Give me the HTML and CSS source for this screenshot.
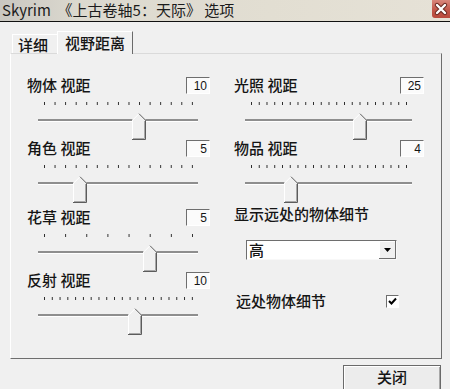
FILE: index.html
```html
<!doctype html>
<html lang="zh-CN">
  <head>
    <meta charset="UTF-8" />
    <title>Skyrim 选项</title>
    <link rel="stylesheet" href="styles.css">
  </head>
  <body>
    <svg class="defs" width="0" height="0">
      <symbol id="thumb" viewBox="0 0 14 27">
        <path d="M0 27V7L7 0L14 7V27Z" fill="#f0f0f0" />
        <path d="M0.5 26V7.2L7 0.7" stroke="#fff" fill="none" />
        <path d="M7 0.7L13.5 7.2V26.5H0" stroke="#5c5c5c" fill="none" />
        <path d="M12.5 8V25.5H1" stroke="#a8a8a8" fill="none" />
      </symbol>
    </svg>

    <div class="titlebar">
      <span class="title">Skyrim  《上古卷轴5：天际》 选项</span>
      <span class="close">
        <svg width="18" height="18" viewBox="0 0 18 18">
          <path d="M5 5L13 13M13 5L5 13" stroke="#6a2a22" stroke-width="4.4" stroke-linecap="round" />
          <path d="M5 5L13 13M13 5L5 13" stroke="#fff" stroke-width="2.4" stroke-linecap="round" />
        </svg>
      </span>
    </div>

    <div class="tabs">
      <span class="tab">详细</span>
      <span class="tab active">视野距离</span>
    </div>

    <div class="panel">
      <div class="col">
        <div class="block">
          <div class="head"><span class="label">物体 视距</span><span class="value">10</span></div>
          <div class="slider" style="--n: 15; --v: 0.64">
            <div class="ticks"></div>
            <div class="track"></div>
            <svg class="thumb"><use href="#thumb" /></svg>
          </div>
        </div>
        <div class="block spaced">
          <div class="head"><span class="label">角色 视距</span><span class="value">5</span></div>
          <div class="slider" style="--n: 15; --v: 0.24">
            <div class="ticks"></div>
            <div class="track"></div>
            <svg class="thumb"><use href="#thumb" /></svg>
          </div>
        </div>
        <div class="block">
          <div class="head"><span class="label">花草 视距</span><span class="value">5</span></div>
          <div class="slider" style="--n: 8; --v: 0.7143">
            <div class="ticks"></div>
            <div class="track"></div>
            <svg class="thumb"><use href="#thumb" /></svg>
          </div>
        </div>
        <div class="block">
          <div class="head"><span class="label">反射 视距</span><span class="value">10</span></div>
          <div class="slider low" style="--n: 20; --v: 0.61">
            <div class="ticks"></div>
            <div class="track"></div>
            <svg class="thumb"><use href="#thumb" /></svg>
          </div>
        </div>
      </div>

      <div class="col">
        <div class="block">
          <div class="head"><span class="label">光照 视距</span><span class="value">25</span></div>
          <div class="slider" style="--n: 21; --v: 0.70">
            <div class="ticks"></div>
            <div class="track"></div>
            <svg class="thumb"><use href="#thumb" /></svg>
          </div>
        </div>
        <div class="block">
          <div class="head"><span class="label">物品 视距</span><span class="value">4</span></div>
          <div class="slider" style="--n: 21; --v: 0.255">
            <div class="ticks"></div>
            <div class="track"></div>
            <svg class="thumb"><use href="#thumb" /></svg>
          </div>
        </div>

        <div class="label detail-title">显示远处的物体细节</div>
        <div class="select">
          <span class="select-text">高</span>
          <span class="select-btn">
            <svg width="7" height="4" viewBox="0 0 7 4"><path d="M0 0H7L3.5 4Z" fill="#000" /></svg>
          </span>
        </div>

        <div class="check-row">
          <span class="label">远处物体细节</span>
          <span class="checkbox">
            <svg width="9" height="8" viewBox="0 0 9 8"><path d="M1 4L3.5 6.5L8 1.5" stroke="#000" stroke-width="2" fill="none" /></svg>
          </span>
        </div>
      </div>
    </div>

    <div class="footer">
      <button class="btn">关闭</button>
    </div>
  </body>
</html>
```

FILE: styles.css
```css
* {
  box-sizing: border-box;
  padding: 0;
  margin: 0;
}

html,
body {
  width: 450px;
  height: 389px;
  overflow: hidden;
}

body {
  background: #f0f0f0;
  color: #151515;
  font-family: "Noto Sans CJK SC", "Noto Sans", sans-serif;
  font-size: 15px;
  font-weight: 500;
}

.defs {
  position: absolute;
}

/* title bar */

.titlebar {
  display: flex;
  height: 22px;
  border-bottom: 1px solid #111;
  background: linear-gradient(to right, #c9c7c1 0, #dcd9cf 18%, #e2ded2 60%, #e6e2d7 100%);
}

.title {
  flex: 1;
  padding-left: 2px;
  font-size: 15px;
  font-weight: 400;
  line-height: 20px;
  white-space: pre;
  color: #1b1b1b;
}

.close {
  display: block;
  width: 18px;
  height: 18px;
  border-bottom-left-radius: 3px;
  background: linear-gradient(#d9877c, #c2574a 55%, #b94a3d);
}

.close svg {
  display: block;
}

/* tabs */

.tabs {
  display: flex;
  align-items: flex-end;
  height: 22px;
  margin: 9px 0 0 12px;
}

.tab {
  height: 19px;
  padding: 0 9px 0 5px;
  line-height: 19px;
  border-top: 1px solid #fff;
  border-left: 1px solid #fff;
}

.tab.active {
  position: relative;
  z-index: 1;
  height: 23px;
  margin-bottom: -1px;
  padding: 0 7px 0 7px;
  line-height: 21px;
  background: #f0f0f0;
  border-right: 1px solid #6a6a6a;
}

/* panel */

.panel {
  display: grid;
  grid-template-columns: 183px 190px;
  column-gap: 24px;
  align-items: start;
  width: 432px;
  height: 306px;
  margin-left: 10px;
  padding: 22px 0 0 16px;
  border: 1px solid #fff;
  border-top-color: #dadada;
  border-right-color: #6e6e6e;
  border-bottom-color: #6e6e6e;
}

.block {
  height: 63px;
}

.block.spaced {
  height: 69px;
}

.head {
  display: flex;
  align-items: center;
  justify-content: space-between;
  height: 18px;
}

.label {
  line-height: 18px;
  white-space: nowrap;
}

.value {
  width: 24px;
  height: 17px;
  padding-right: 2px;
  font-family: "Liberation Sans", Arial, sans-serif;
  font-size: 12px;
  font-weight: 400;
  line-height: 16px;
  text-align: right;
  background: #fbfbfb;
  border: 1px solid #fff;
  border-top-color: #6e6e6e;
  border-left-color: #6e6e6e;
}

/* trackbar */

.slider {
  position: relative;
  height: 45px;
}

.slider.low {
  margin-top: 7px;
}

.ticks {
  height: 3px;
  margin: 8px 17px 0;
  background-image: linear-gradient(to right, #2a2a2a 1px, transparent 1px);
  background-size: calc((100% - 1px) / (var(--n) - 1)) 100%;
  background-repeat: repeat-x;
}

.track {
  height: 3px;
  margin: 14px 12px 0 11px;
  border-top: 2px solid #8e8e8e;
  border-bottom: 1px solid #fff;
}

.thumb {
  position: absolute;
  top: 11px;
  left: calc(17px + (100% - 34px) * var(--v) - 7px);
  width: 14px;
  height: 27px;
}

/* right column extras */

.detail-title {
  margin-top: 3px;
}

.select {
  display: flex;
  width: 151px;
  height: 20px;
  margin: 17px 0 0 12px;
  background: #fff;
  border: 1px solid #f8f8f8;
  border-top-color: #6e6e6e;
  border-left-color: #6e6e6e;
}

.select-text {
  flex: 1;
  padding-left: 2px;
  line-height: 18px;
}

.select-btn {
  display: flex;
  align-items: center;
  justify-content: center;
  width: 17px;
  background: #f0f0f0;
  border-right: 1px solid #6e6e6e;
  border-bottom: 1px solid #6e6e6e;
  box-shadow: inset 1px 1px #fff;
}

.check-row {
  display: flex;
  align-items: center;
  height: 18px;
  margin: 32px 0 0 2px;
}

.checkbox {
  display: flex;
  align-items: center;
  justify-content: center;
  width: 13px;
  height: 13px;
  margin: 0 25px 0 auto;
  background: #fff;
  border: 1px solid #fff;
  border-top-color: #6e6e6e;
  border-left-color: #6e6e6e;
}

/* footer */

.footer {
  display: flex;
  justify-content: flex-end;
  padding: 6px 9px 0 0;
}

.btn {
  width: 98px;
  height: 27px;
  padding-bottom: 4px;
  font-family: inherit;
  font-size: 15px;
  font-weight: 500;
  color: #151515;
  background: #ececec;
  border: 1px solid #6a6a6a;
  box-shadow: inset 1px 1px #fff, inset -1px -1px #a8a8a8;
}
```
